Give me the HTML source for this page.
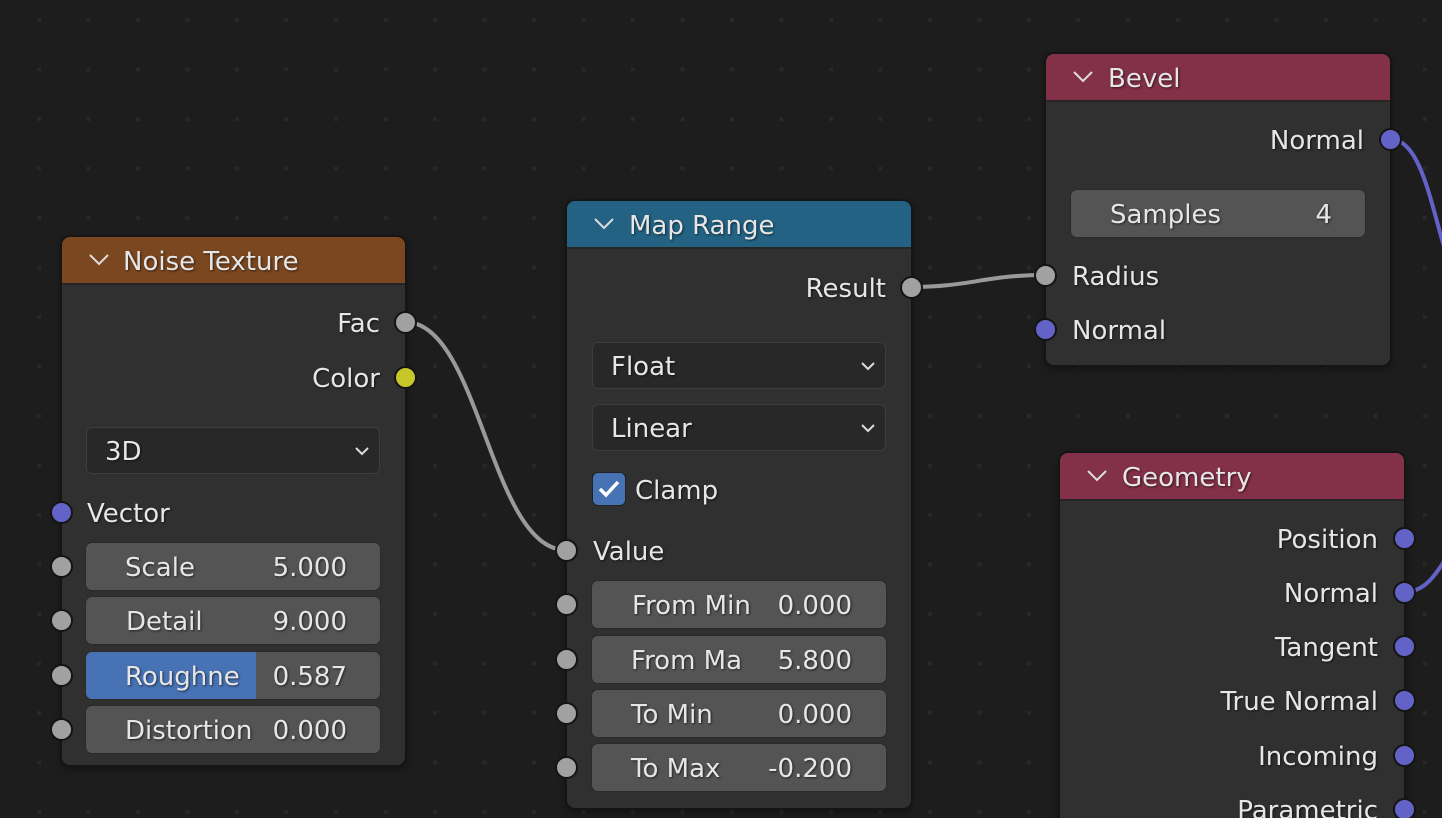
<!DOCTYPE html>
<html><head><meta charset="utf-8"><style>
*{margin:0;padding:0;box-sizing:border-box}
html{width:1442px;height:818px;overflow:hidden}
body{width:1442px;height:818px;overflow:hidden;background-color:#1d1d1d;position:relative;font-family:"DejaVu Sans","Liberation Sans",sans-serif;font-size:26px;color:#e6e6e6}
.n{position:absolute;background:#303030;border-radius:8px;box-shadow:0 0 0 2px #151515,0 3px 8px rgba(0,0,0,.5);overflow:hidden}
.h{position:absolute;left:0;right:0;top:0;height:48px;border-bottom:2px solid #252525}
.t{position:absolute;height:40px;line-height:40px;white-space:nowrap;text-shadow:1px 1px 2px rgba(0,0,0,.6);margin-top:2px}
.r{text-align:right}
.s{position:absolute;width:23px;height:23px;border-radius:50%;border:2px solid #141414;background:#a1a1a1;margin:-11.5px 0 0 -11.5px;z-index:5}
.p{background:#6363c7}.y{background:#c7c729}
.f{position:absolute;height:47px;background:#545454;border-radius:6px;box-shadow:0 0 0 1px #2a2a2a;overflow:hidden}
.d{position:absolute;height:47px;background:#282828;border-radius:6px;border:1.5px solid #3d3d3d}
svg{position:absolute;left:0;top:0}
.cv{position:absolute}
</style></head><body>
<svg width="1442" height="818" style="z-index:0">
<defs><pattern id="g" x="37" y="18" width="49.5" height="49.5" patternUnits="userSpaceOnUse"><rect width="4" height="4" fill="#282828"/></pattern></defs>
<rect width="1442" height="818" fill="url(#g)"/>
</svg>
<svg width="1442" height="818" style="z-index:1">
<path d="M405 322 C480 322,490 550,566 550" stroke="#9a9a9a" stroke-width="4" fill="none"/>
<path d="M911 287 C970 287,985 275,1045 275" stroke="#9a9a9a" stroke-width="4" fill="none"/>
<path d="M1390 139 C1420 139,1430 200,1445 250" stroke="#6363c7" stroke-width="4" fill="none"/>
<path d="M1404 592 C1425 592,1435 575,1445 560" stroke="#6363c7" stroke-width="4" fill="none"/>
</svg>

<!-- Noise Texture -->
<div class="n" style="left:62px;top:237px;width:343px;height:528px;z-index:2">
 <div class="h" style="background:#7a4720"></div>
 <svg class="cv" style="left:26px;top:16px" width="22" height="14"><polyline points="2,2 11,11 20,2" stroke="#ddd" stroke-width="2" fill="none"/></svg>
 <div class="t" style="left:61px;top:3px">Noise Texture</div>
 <div class="t r" style="right:25px;top:65px">Fac</div>
 <div class="t r" style="right:25px;top:120px">Color</div>
 <div class="d" style="left:24px;top:190px;width:294px"></div>
 <div class="t" style="left:43px;top:193px">3D</div>
 <svg class="cv" style="left:292px;top:209px" width="16" height="10"><polyline points="2,2 8,8 14,2" stroke="#ddd" stroke-width="2" fill="none"/></svg>
 <div class="t" style="left:25px;top:255px">Vector</div>
 <div class="f" style="left:24px;top:306px;width:294px"></div><div class="t" style="left:63px;top:309px">Scale</div><div class="t r" style="right:58px;top:309px">5.000</div>
 <div class="f" style="left:24px;top:360px;width:294px"></div><div class="t" style="left:64px;top:363px">Detail</div><div class="t r" style="right:58px;top:363px">9.000</div>
 <div class="f" style="left:24px;top:415px;width:294px"><div style="position:absolute;left:0;top:0;bottom:0;width:170px;background:#4772b3"></div></div><div class="t" style="left:63px;top:418px">Roughne</div><div class="t r" style="right:58px;top:418px">0.587</div>
 <div class="f" style="left:24px;top:469px;width:294px"></div><div class="t" style="left:63px;top:472px">Distortion</div><div class="t r" style="right:58px;top:472px">0.000</div>
</div>
<div class="s" style="left:405px;top:322px"></div>
<div class="s y" style="left:405px;top:377px"></div>
<div class="s p" style="left:61px;top:512px"></div>
<div class="s" style="left:61px;top:566px"></div>
<div class="s" style="left:61px;top:620px"></div>
<div class="s" style="left:61px;top:675px"></div>
<div class="s" style="left:61px;top:729px"></div>

<!-- Map Range -->
<div class="n" style="left:567px;top:201px;width:344px;height:607px;z-index:2">
 <div class="h" style="background:#246283"></div>
 <svg class="cv" style="left:26px;top:16px" width="22" height="14"><polyline points="2,2 11,11 20,2" stroke="#ddd" stroke-width="2" fill="none"/></svg>
 <div class="t" style="left:62px;top:3px">Map Range</div>
 <div class="t r" style="right:25px;top:66px">Result</div>
 <div class="d" style="left:25px;top:141px;width:294px"></div><div class="t" style="left:44px;top:144px">Float</div>
 <svg class="cv" style="left:293px;top:160px" width="16" height="10"><polyline points="2,2 8,8 14,2" stroke="#ddd" stroke-width="2" fill="none"/></svg>
 <div class="d" style="left:25px;top:203px;width:294px"></div><div class="t" style="left:44px;top:206px">Linear</div>
 <svg class="cv" style="left:293px;top:222px" width="16" height="10"><polyline points="2,2 8,8 14,2" stroke="#ddd" stroke-width="2" fill="none"/></svg>
 <div style="position:absolute;left:26px;top:272px;width:32px;height:32px;background:#4772b3;border-radius:5px;box-shadow:0 0 0 1px #222"><svg width="32" height="32"><path d="M7 16 L13 22 L25 9" stroke="#fff" stroke-width="3.5" fill="none"/></svg></div>
 <div class="t" style="left:68px;top:268px">Clamp</div>
 <div class="t" style="left:26px;top:329px">Value</div>
 <div class="f" style="left:25px;top:380px;width:294px"></div><div class="t" style="left:65px;top:383px">From Min</div><div class="t r" style="right:59px;top:383px">0.000</div>
 <div class="f" style="left:25px;top:435px;width:294px"></div><div class="t" style="left:64px;top:438px">From Ma</div><div class="t r" style="right:59px;top:438px">5.800</div>
 <div class="f" style="left:25px;top:489px;width:294px"></div><div class="t" style="left:64px;top:492px">To Min</div><div class="t r" style="right:59px;top:492px">0.000</div>
 <div class="f" style="left:25px;top:543px;width:294px"></div><div class="t" style="left:64px;top:546px">To Max</div><div class="t r" style="right:59px;top:546px">-0.200</div>
</div>
<div class="s" style="left:911px;top:287px"></div>
<div class="s" style="left:566px;top:550px"></div>
<div class="s" style="left:566px;top:604px"></div>
<div class="s" style="left:566px;top:659px"></div>
<div class="s" style="left:566px;top:713px"></div>
<div class="s" style="left:566px;top:767px"></div>

<!-- Bevel -->
<div class="n" style="left:1046px;top:54px;width:344px;height:311px;z-index:2">
 <div class="h" style="background:#833049"></div>
 <svg class="cv" style="left:26px;top:16px" width="22" height="14"><polyline points="2,2 11,11 20,2" stroke="#ddd" stroke-width="2" fill="none"/></svg>
 <div class="t" style="left:62px;top:3px">Bevel</div>
 <div class="t r" style="right:26px;top:65px">Normal</div>
 <div class="f" style="left:25px;top:136px;width:294px"></div><div class="t" style="left:64px;top:139px">Samples</div><div class="t r" style="right:58px;top:139px">4</div>
 <div class="t" style="left:26px;top:201px">Radius</div>
 <div class="t" style="left:26px;top:255px">Normal</div>
</div>
<div class="s p" style="left:1390px;top:139px"></div>
<div class="s" style="left:1045px;top:275px"></div>
<div class="s p" style="left:1045px;top:329px"></div>

<!-- Geometry -->
<div class="n" style="left:1060px;top:453px;width:344px;height:380px;z-index:2">
 <div class="h" style="background:#833049"></div>
 <svg class="cv" style="left:26px;top:16px" width="22" height="14"><polyline points="2,2 11,11 20,2" stroke="#ddd" stroke-width="2" fill="none"/></svg>
 <div class="t" style="left:62px;top:3px">Geometry</div>
 <div class="t r" style="right:26px;top:65px">Position</div>
 <div class="t r" style="right:26px;top:119px">Normal</div>
 <div class="t r" style="right:26px;top:173px">Tangent</div>
 <div class="t r" style="right:26px;top:227px">True Normal</div>
 <div class="t r" style="right:26px;top:282px">Incoming</div>
 <div class="t r" style="right:26px;top:336px">Parametric</div>
</div>
<div class="s p" style="left:1404px;top:538px"></div>
<div class="s p" style="left:1404px;top:592px"></div>
<div class="s p" style="left:1404px;top:646px"></div>
<div class="s p" style="left:1404px;top:700px"></div>
<div class="s p" style="left:1404px;top:755px"></div>
<div class="s p" style="left:1404px;top:809px"></div>
</body></html>
